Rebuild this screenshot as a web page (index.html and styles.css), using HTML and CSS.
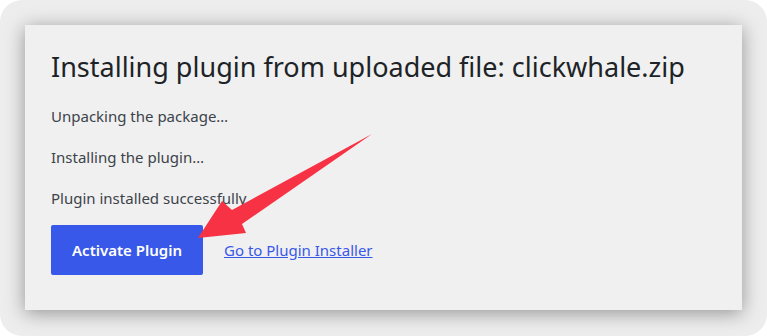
FILE: index.html
```html
<!DOCTYPE html>
<html>
<head>
<meta charset="utf-8">
<link rel="stylesheet" href="styles.css">
</head>
<body>
<div class="frame">
  <div class="card">
    <h1 class="title">Installing plugin from uploaded file: clickwhale.zip</h1>
    <p class="step">Unpacking the package…</p>
    <p class="step">Installing the plugin…</p>
    <p class="step">Plugin installed successfully.</p>
    <div class="actions">
      <a class="btn" href="#">Activate Plugin</a>
      <a class="link" href="#">Go to Plugin Installer</a>
    </div>
    <svg class="arrow" width="767" height="336" viewBox="0 0 767 336">
      <polygon points="372,134 242,224 246,233 198,238 222,201 232,210" fill="#f73245"/>
    </svg>
  </div>
</div>
</body>
</html>
```
FILE: styles.css
```css
html, body { margin: 0; padding: 0; background: #ffffff; }
.frame {
  width: 767px; height: 336px; box-sizing: border-box;
  border-radius: 22px; background: #ededed;
  padding: 25px 25px 26px 25px; overflow: hidden; position: relative;
}
.card {
  width: 717px; height: 285px; box-sizing: border-box;
  background: #f0f0f0;
  box-shadow: 0 3px 18px rgba(0,0,0,0.38);
  padding: 24px 26px 0 26px;
  font-family: "Noto Sans", sans-serif; color: #1d2327;
}
.title { margin: 0 0 11px 0; font-weight: 400; font-size: 27px; line-height: 36px; color: #1d2327; }
.step { margin: 0; font-size: 15px; line-height: 41px; color: #3c434a; }
.actions { display: flex; align-items: center; gap: 21px; margin-top: 6px; }
.btn {
  display: flex; align-items: center; justify-content: center;
  width: 152px; height: 50px; background: #3858e9; color: #fff;
  border-radius: 2px; font-weight: 600; font-size: 15px; text-decoration: none;
}
.link { color: #3858e9; font-size: 15px; text-decoration: underline; }
.arrow { position: absolute; left: 0; top: 0; pointer-events: none; }
```
